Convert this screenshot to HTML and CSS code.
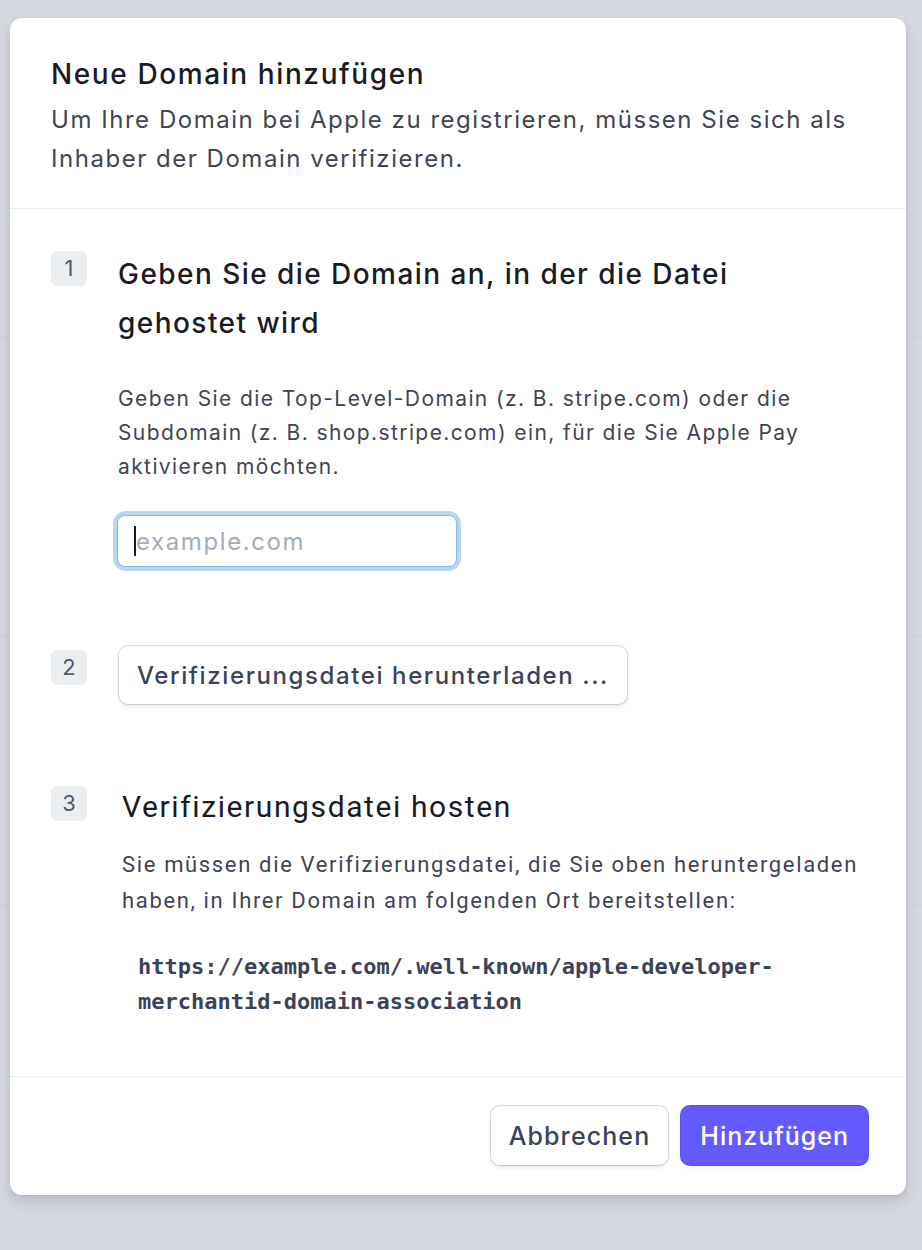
FILE: index.html
```html
<!DOCTYPE html>
<html lang="de">
<head>
<meta charset="utf-8">
<title>Neue Domain hinzufügen</title>
<link rel="stylesheet" href="styles.css">
</head>
<body>
<div class="page">
  <div class="page-row r1"></div>
  <div class="page-row r2"></div>
  <div class="page-row r3"></div>
  <div class="page-row r4"></div>
</div>
<div class="modal">
  <header class="modal-header">
    <h1 class="modal-title">Neue Domain hinzufügen</h1>
    <p class="modal-sub">Um Ihre Domain bei Apple zu registrieren, müssen Sie sich als Inhaber der Domain verifizieren.</p>
  </header>
  <section class="modal-body">
    <div class="step step-1">
      <div class="badge">1</div>
      <div class="step-content">
        <h2 class="step-title">Geben Sie die Domain an, in der die Datei gehostet wird</h2>
        <p class="step-text">Geben Sie die Top-Level-Domain (z. B. stripe.com) oder die Subdomain (z. B. shop.stripe.com) ein, für die Sie Apple Pay aktivieren möchten.</p>
        <div class="input-ring"><div class="input"><span class="caret"></span><span class="placeholder">example.com</span></div></div>
      </div>
    </div>
    <div class="step step-2">
      <div class="badge">2</div>
      <div class="step-content">
        <button class="btn btn-secondary btn-download">Verifizierungsdatei herunterladen ...</button>
      </div>
    </div>
    <div class="step step-3">
      <div class="badge">3</div>
      <div class="step-content alt">
        <h2 class="step-title alt-title">Verifizierungsdatei hosten</h2>
        <p class="step-text alt-text">Sie müssen die Verifizierungsdatei, die Sie oben heruntergeladen haben, in Ihrer Domain am folgenden Ort bereitstellen:</p>
        <code class="code">https://example.com/.well-known/apple-developer-<br>merchantid-domain-association</code>
      </div>
    </div>
  </section>
  <footer class="modal-footer">
    <button class="btn btn-secondary btn-cancel">Abbrechen</button>
    <button class="btn btn-primary">Hinzufügen</button>
  </footer>
</div>
</body>
</html>
```
FILE: styles.css
```css
* { box-sizing: border-box; }
html, body { margin: 0; padding: 0; }
body {
  width: 922px;
  height: 1250px;
  background: #d5d8df;
  font-family: Inter, "Noto Sans", sans-serif;
  position: relative;
  overflow: hidden;
}
.page { display: flex; flex-direction: column; }
.page-row { border-bottom: 1px solid #cdd0d8; }
.r1 { height: 338px; }
.r2 { height: 298px; }
.r3 { height: 270px; }
.r4 { height: 300px; border-bottom: none; }

.modal {
  position: absolute;
  left: 10px;
  top: 18px;
  width: 896px;
  height: 1177px;
  background: #fff;
  border-radius: 12px;
  box-shadow: 0 7px 14px rgba(50, 50, 93, 0.12), 0 3px 6px rgba(0, 0, 0, 0.08);
  display: flex;
  flex-direction: column;
}
.modal-header {
  padding: 38px 41px 30px;
  border-bottom: 1px solid #ebeef1;
}
.modal-title {
  margin: 0 0 8px;
  font-size: 28px;
  line-height: 36px;
  letter-spacing: 1.6px;
  font-weight: 500;
  color: #1a1b25;
}
.modal-sub {
  margin: 0;
  font-size: 24px;
  line-height: 39px;
  letter-spacing: 1.53px;
  color: #414552;
}
.modal-body {
  flex: 1;
  padding: 41px 41px 0;
  display: flex;
  flex-direction: column;
  gap: 75px;
}
.step { display: flex; align-items: flex-start; }
.step-3 { margin-top: 4px; }
.badge {
  width: 36px;
  height: 35px;
  flex: none;
  background: #ebeef1;
  border-radius: 6px;
  color: #545969;
  font-size: 22px;
  line-height: 35px;
  text-align: center;
  margin-right: 31px;
}
.step-1 .badge { margin-top: 1px; }
.step-2 .badge { margin-top: 4px; }
.step-3 .badge { margin-top: 3px; }
.step-content { flex: 1; min-width: 0; }
.step-title {
  margin: 0;
  font-size: 28px;
  line-height: 49px;
  letter-spacing: 1.45px;
  font-weight: 500;
  color: #1a1b25;
  max-width: 660px;
}
.step-text {
  margin: 34px 0 0;
  font-size: 21px;
  line-height: 34px;
  letter-spacing: 1.4px;
  color: #414552;
  max-width: 740px;
}
.input-ring {
  margin: 27px 0 0 -5px;
  width: 348px;
  padding: 4px;
  border-radius: 13px;
  background: #b7d6f5;
}
.input {
  height: 52px;
  background: #fff;
  border: 1px solid #8fb6e3;
  border-radius: 8px;
  display: flex;
  align-items: center;
  padding-left: 16px;
}
.caret {
  width: 2px;
  height: 30px;
  background: #1a1b25;
}
.placeholder {
  font-size: 24px;
  letter-spacing: 1.6px;
  color: #a3acb9;
}
.btn {
  font-family: Inter, "Noto Sans", sans-serif;
  border: none;
  border-radius: 9px;
  height: 59px;
  padding: 0 18px;
  font-size: 25px;
  letter-spacing: 1.1px;
  font-weight: 500;
  cursor: pointer;
}
.btn-secondary {
  background: #fff;
  color: #3c4257;
  box-shadow: 0 0 0 1px rgba(60, 66, 87, 0.18), 0 2px 4px rgba(60, 66, 87, 0.14);
}
.btn-primary {
  background: #635bff;
  color: #fff;
  padding: 0 19px;
  letter-spacing: 1px;
  box-shadow: 0 0 0 1px #5851ea, 0 2px 4px rgba(60, 66, 87, 0.1);
}
.btn-download {
  margin-left: 1px;
  height: 58px;
  padding: 0 18px;
  font-size: 24px;
  letter-spacing: 1.6px;
}
.alt { padding-left: 4px; }
.alt-title {
  font-family: Roboto, sans-serif;
  font-weight: 400;
  font-size: 30px;
  line-height: 48px;
  letter-spacing: 1.6px;
}
.alt-text {
  font-family: Roboto, sans-serif;
  margin-top: 16px;
  font-size: 22px;
  line-height: 36px;
  letter-spacing: 1.65px;
}
.code {
  display: block;
  margin: 30px 0 0 16px;
  font-family: "DejaVu Sans Mono", monospace;
  font-weight: 700;
  font-size: 22px;
  line-height: 35px;
  color: #3c4257;
}
.modal-footer {
  border-top: 1px solid #ebeef1;
  padding: 29px 38px 30px;
  display: flex;
  justify-content: flex-end;
  gap: 13px;
}
```
